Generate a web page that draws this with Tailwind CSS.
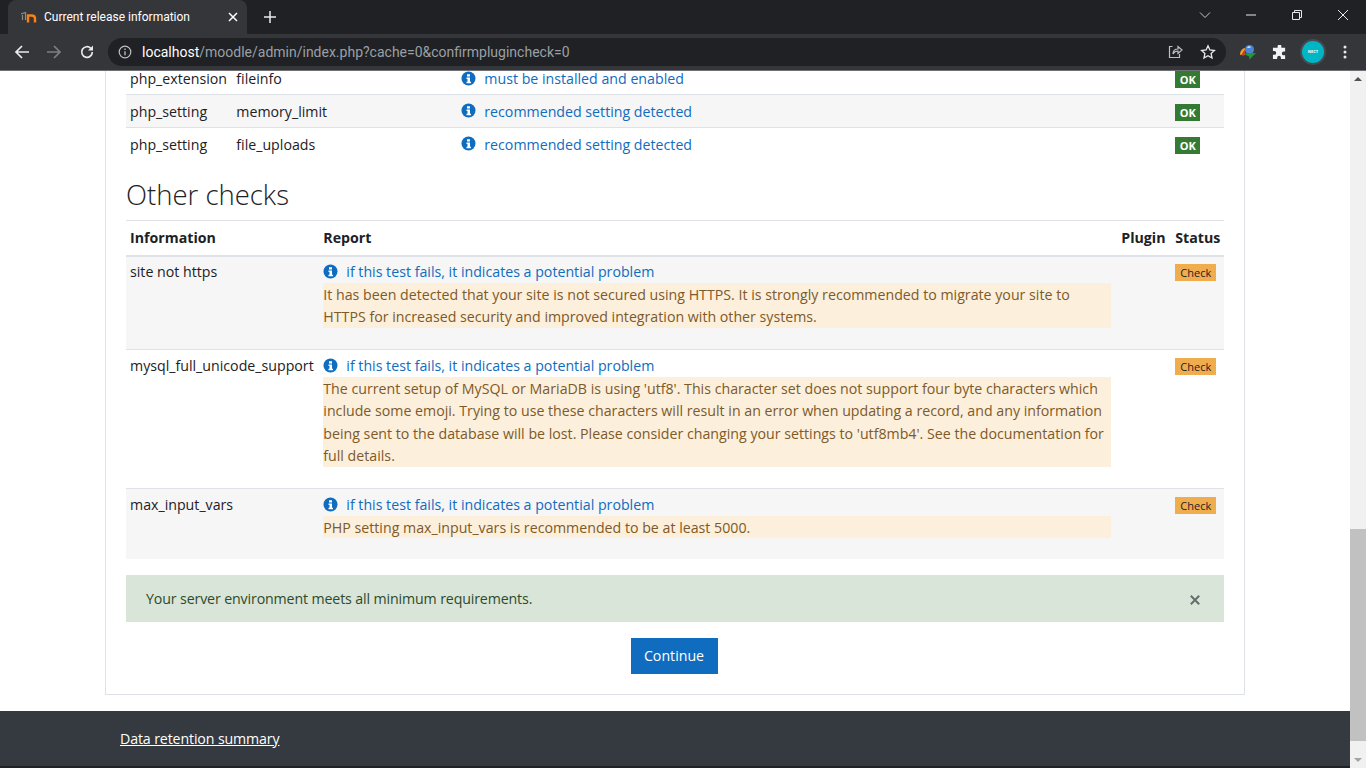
<!DOCTYPE html>
<html lang="en">
<head>
    <meta charset="UTF-8">
    <title>Current release information</title>
    <script src="https://cdn.jsdelivr.net/npm/@tailwindcss/browser@4"></script>
</head>
<body class="h-screen overflow-hidden flex flex-col bg-white font-['Open_Sans',sans-serif] text-[14.2px] leading-[22.5px] text-[#1d2125]">
    <!-- browser chrome -->
    <div class="h-[34px] bg-[#202124] flex items-end relative">
        <div class="ml-2 w-[239px] h-[34px] bg-[#35363a] rounded-t-lg flex items-center pl-[13px] pr-[7px] text-white text-[12px] font-['Roboto',sans-serif]">
            <svg class="w-[17px] h-[14px] mr-[6px]" viewBox="0 0 17 14"><path d="M0 4l4.500-1.500V5" fill="none" stroke="#8f8a85" stroke-width="1.200"/><path d="M1.500 5v5M4.500 5v5" stroke="#8f8a85" stroke-width="1.200"/><path d="M7 12.500V5.500h3.500c2 0 3.500 1 3.500 3v4" fill="none" stroke="#f98012" stroke-width="2.400"/></svg>
            <span class="flex-1">Current release information</span>
            <svg class="w-4 h-4 mr-[-1px]" viewBox="0 0 16 16"><path d="M4 4l8 8M12 4l-8 8" stroke="#fff" stroke-width="1.500"/></svg>
        </div>
        <svg class="w-4 h-4 ml-[15px] mb-[9px]" viewBox="0 0 16 16"><path d="M8 2v12M2 8h12" stroke="#e8eaed" stroke-width="1.500"/></svg>
        <div class="ml-auto flex items-center h-[34px] mb-[2px]">
            <svg class="w-3 h-3 mr-[34px]" viewBox="0 0 12 12"><path d="M1 3.500l5 5 5-5" fill="none" stroke="#c4c7c5" stroke-width="1"/></svg>
            <svg class="w-3 h-3 mr-[34px]" viewBox="0 0 12 12"><path d="M1 6h10" stroke="#e8eaed" stroke-width="1"/></svg>
            <svg class="w-3 h-3 mr-[34px]" viewBox="0 0 12 12"><path d="M1.500 3.500h7v7h-7zM3.500 3.500v-2h7v7h-2" fill="none" stroke="#e8eaed" stroke-width="1"/></svg>
            <svg class="w-3 h-3 mr-[17px]" viewBox="0 0 12 12"><path d="M1 1l10 10M11 1L1 11" stroke="#e8eaed" stroke-width="1"/></svg>
        </div>
    </div>
    <div class="h-[36px] bg-[#35363a] flex items-center relative">
        <svg class="w-4 h-4 ml-[14px]" viewBox="0 0 16 16"><path d="M15 8H2M8 2L2 8l6 6" fill="none" stroke="#e8eaed" stroke-width="1.700"/></svg>
        <svg class="w-4 h-4 ml-[16px]" viewBox="0 0 16 16"><path d="M1 8h13M8 2l6 6-6 6" fill="none" stroke="#7d7f82" stroke-width="1.700"/></svg>
        <svg class="w-4 h-4 ml-[17px]" viewBox="0 0 16 16"><path d="M13.300 8a5.300 5.300 0 1 1-1.500-3.700" fill="none" stroke="#e8eaed" stroke-width="1.700"/><path d="M14 1.500v5h-5z" fill="#e8eaed"/></svg>
        <div class="ml-[13px] w-[1118px] h-7 rounded-full bg-[#202124] flex items-center pl-[8px] font-['Roboto',sans-serif] text-[14px] text-[#9aa0a6]">
            <svg class="w-[14px] h-[14px] mr-[10px] ml-[2px]" viewBox="0 0 14 14"><circle cx="7" cy="7" r="5.800" fill="none" stroke="#bdc1c6" stroke-width="1.200"/><path d="M7 6.200v4M7 3.500v1.400" stroke="#bdc1c6" stroke-width="1.300"/></svg>
            <span><span class="text-white">localhost</span>/moodle/admin/index.php?cache=0&amp;confirmplugincheck=0</span>
            <svg class="w-4 h-4 ml-auto mr-[17px]" viewBox="0 0 16 16"><path d="M5.500 2.500H2.500v11h10V10" fill="none" stroke="#bdc1c6" stroke-width="1.200"/><path d="M6 10c0-3 2-5 5-5V2.500L15 6l-4 3.500V7c-2 0-4 1-5 3z" fill="none" stroke="#bdc1c6" stroke-width="1.200"/></svg>
            <svg class="w-4 h-4 mr-[10px]" viewBox="0 0 16 16"><path d="M8 1.800l1.900 4.200 4.500.5-3.300 3 .9 4.500L8 11.700 4 14l.9-4.500-3.300-3 4.500-.5z" fill="none" stroke="#e8eaed" stroke-width="1.300"/></svg>
        </div>
        <svg class="w-[18px] h-4 ml-[13px]" viewBox="0 0 18 16"><path d="M1 11c0-4 2-6.500 5-7L5 10z" fill="#e8a81f"/><path d="M3 12c0-3 1-5 3-6v5z" fill="#d8342c"/><circle cx="10.500" cy="5.500" r="4.500" fill="#4a86d8"/><path d="M8 3.500c1-1.500 3-1.500 4-.5-1 1-3 1.500-4 .5z" fill="#cfe3f7"/><path d="M4 9.500l13-.5-6.500 6.500-.5-3z" fill="#1f9a2f"/></svg>
        <svg class="w-[15px] h-[15px] ml-[15px]" viewBox="0 0 16 16"><path d="M6 1.500a2 2 0 0 1 4 0V3h4v4h-1.500a2 2 0 0 0 0 4H14v4H9.500v-1.500a2 2 0 0 0-4 0V15H1v-4.500h1.500a2 2 0 0 0 0-4H1V3h5z" fill="#f1f3f4"/></svg>
        <div class="ml-[13px] w-[26px] h-[26px] rounded-full bg-[#484a4f] flex items-center justify-center">
            <div class="w-[22px] h-[22px] rounded-full bg-[#00b5c4] flex items-center justify-center text-[4px] leading-none font-bold text-white">NECT</div>
        </div>
        <svg class="w-1 h-[14px] ml-[17px]" viewBox="0 0 4 14"><circle cx="2" cy="2" r="1.500" fill="#e8eaed"/><circle cx="2" cy="7" r="1.500" fill="#e8eaed"/><circle cx="2" cy="12" r="1.500" fill="#e8eaed"/></svg>
    </div>
    <div class="h-px bg-[#6e7074]"></div>

    <!-- page viewport -->
    <div class="flex-1 min-h-0 flex bg-[#202124]">
        <div class="flex-1 min-w-0 overflow-hidden bg-white">
            <div>
                <div class="mx-[105px] border border-[#dee2e6] border-t-0 px-5 pb-[20px]">
                    <table class="w-full table-fixed border-collapse">
                        <colgroup><col class="w-[105.500px]"><col class="w-[225px]"><col><col class="w-[53.500px]"></colgroup>
                        <tr class="h-[23px] border-b border-[#dee2e6] align-top leading-[16px]">
                            <td class="pl-[4px] pr-[4.800px]">php_extension</td><td class="px-[4.800px]">fileinfo</td>
                            <td class="px-[4.800px]"><span class="flex items-center gap-[8px] h-[16px] text-[#0f6cbf]"><svg class="w-[15px] h-[15px] mb-[2px]" viewBox="0 0 15 15"><circle cx="7.500" cy="7.500" r="7" fill="#0f6cbf"/><path d="M6 3.200h3v2.300H6zM5.500 6.500h3.500v4.200h1v1.500H5.500v-1.500h1V8h-1z" fill="#fff"/></svg>must be installed and enabled</span></td>
                            <td class="px-[4.800px]"><span class="block w-[25px] h-[17px] bg-[#357a32] text-white text-[11px] leading-[17px] font-bold text-center">OK</span></td>
                        </tr>
                        <tr class="h-[33px] border-b border-[#dee2e6] bg-[#f6f6f6] align-top leading-[22px]">
                            <td class="pl-[4px] pr-[4.800px] pt-[6px]">php_setting</td><td class="px-[4.800px] pt-[6px]">memory_limit</td>
                            <td class="px-[4.800px] pt-[6px]"><span class="flex items-center gap-[8px] text-[#0f6cbf]"><svg class="w-[15px] h-[15px] mb-[2px]" viewBox="0 0 15 15"><circle cx="7.500" cy="7.500" r="7" fill="#0f6cbf"/><path d="M6 3.200h3v2.300H6zM5.500 6.500h3.500v4.200h1v1.500H5.500v-1.500h1V8h-1z" fill="#fff"/></svg>recommended setting detected</span></td>
                            <td class="px-[4.800px] pt-[9px]"><span class="block w-[25px] h-[17px] bg-[#357a32] text-white text-[11px] leading-[17px] font-bold text-center">OK</span></td>
                        </tr>
                        <tr class="h-[33px] align-top leading-[22px]">
                            <td class="pl-[4px] pr-[4.800px] pt-[6px]">php_setting</td><td class="px-[4.800px] pt-[6px]">file_uploads</td>
                            <td class="px-[4.800px] pt-[6px]"><span class="flex items-center gap-[8px] text-[#0f6cbf]"><svg class="w-[15px] h-[15px] mb-[2px]" viewBox="0 0 15 15"><circle cx="7.500" cy="7.500" r="7" fill="#0f6cbf"/><path d="M6 3.200h3v2.300H6zM5.500 6.500h3.500v4.200h1v1.500H5.500v-1.500h1V8h-1z" fill="#fff"/></svg>recommended setting detected</span></td>
                            <td class="px-[4.800px] pt-[9px]"><span class="block w-[25px] h-[17px] bg-[#357a32] text-white text-[11px] leading-[17px] font-bold text-center">OK</span></td>
                        </tr>
                    </table>

                    <h2 class="mt-[17px] mb-[7px] text-[27.500px] leading-[36px] font-light">Other checks</h2>

                    <table class="w-full table-fixed border-collapse">
                        <colgroup><col class="w-[192.500px]"><col><col class="w-[54px]"><col class="w-[53.500px]"></colgroup>
                        <tr class="h-[35px] border-t border-b-2 border-[#dee2e6] font-bold text-left">
                            <th class="pl-[4px] pr-[4.800px]">Information</th><th class="px-[4.800px]">Report</th><th class="px-[4.800px]">Plugin</th><th class="px-[4.800px]">Status</th>
                        </tr>
                        <tr class="h-[94px] border-b border-[#dee2e6] bg-[#f6f6f6] align-top">
                            <td class="pl-[4px] pr-[4.800px] pt-[4px]">site not https</td>
                            <td class="pl-[4.800px] pr-[5.800px] pt-[4px]">
                                <span class="flex items-center gap-[8px] h-[23px] text-[#0f6cbf]"><svg class="w-[15px] h-[15px] mb-[2px]" viewBox="0 0 15 15"><circle cx="7.500" cy="7.500" r="7" fill="#0f6cbf"/><path d="M6 3.200h3v2.300H6zM5.500 6.500h3.500v4.200h1v1.500H5.500v-1.500h1V8h-1z" fill="#fff"/></svg>if this test fails, it indicates a potential problem</span>
                                <div class="-mt-[1px] pt-[1px] leading-[22px] bg-[#fcefdc] text-[#7d5a29]">It has been detected that your site is not secured using HTTPS. It is strongly recommended to migrate your site to HTTPS for increased security and improved integration with other systems.</div>
                            </td>
                            <td></td>
                            <td class="px-[4.800px] pt-[7px]"><span class="block w-[41px] h-[17px] bg-[#f0ad4e] text-[11px] leading-[17px] text-center">Check</span></td>
                        </tr>
                        <tr class="h-[139px] border-b border-[#dee2e6] align-top">
                            <td class="pl-[4px] pr-[4.800px] pt-[5px]">mysql_full_unicode_support</td>
                            <td class="pl-[4.800px] pr-[5.800px] pt-[5px]">
                                <span class="flex items-center gap-[8px] h-[22px] text-[#0f6cbf]"><svg class="w-[15px] h-[15px] mb-[2px]" viewBox="0 0 15 15"><circle cx="7.500" cy="7.500" r="7" fill="#0f6cbf"/><path d="M6 3.200h3v2.300H6zM5.500 6.500h3.500v4.200h1v1.500H5.500v-1.500h1V8h-1z" fill="#fff"/></svg>if this test fails, it indicates a potential problem</span>
                                <div class="h-[90px] pt-[0.5px] bg-[#fcefdc] text-[#7d5a29]">The current setup of MySQL or MariaDB is using 'utf8'. This character set does not support four byte characters which include some emoji. Trying to use these characters will result in an error when updating a record, and any information being sent to the database will be lost. Please consider changing your settings to 'utf8mb4'. See the documentation for full details.</div>
                            </td>
                            <td></td>
                            <td class="px-[4.800px] pt-[8px]"><span class="block w-[41px] h-[17px] bg-[#f0ad4e] text-[11px] leading-[17px] text-center">Check</span></td>
                        </tr>
                        <tr class="h-[70px] bg-[#f6f6f6] align-top">
                            <td class="pl-[4px] pr-[4.800px] pt-[5px]">max_input_vars</td>
                            <td class="pl-[4.800px] pr-[5.800px] pt-[5px]">
                                <span class="flex items-center gap-[8px] h-[22px] text-[#0f6cbf]"><svg class="w-[15px] h-[15px] mb-[2px]" viewBox="0 0 15 15"><circle cx="7.500" cy="7.500" r="7" fill="#0f6cbf"/><path d="M6 3.200h3v2.300H6zM5.500 6.500h3.500v4.200h1v1.500H5.500v-1.500h1V8h-1z" fill="#fff"/></svg>if this test fails, it indicates a potential problem</span>
                                <div class="h-[22px] pt-[1px] leading-[21px] bg-[#fcefdc] text-[#7d5a29]">PHP setting max_input_vars is recommended to be at least 5000.</div>
                            </td>
                            <td></td>
                            <td class="px-[4.800px] pt-[8px]"><span class="block w-[41px] h-[17px] bg-[#f0ad4e] text-[11px] leading-[17px] text-center">Check</span></td>
                        </tr>
                    </table>

                    <div class="mt-4 h-[47px] bg-[#d9e5d8] text-[#2d4a2b] flex items-center pl-5 pr-6 tracking-[-0.13px]">
                        <span class="flex-1 pt-[2px]">Your server environment meets all minimum requirements.</span>
                        <svg class="w-[10px] h-[10px] mt-[3px]" viewBox="0 0 10 10"><path d="M.800.800l8.400 8.400M9.200.800L.800 9.200" stroke="#666d6b" stroke-width="2"/></svg>
                    </div>
                    <div class="mt-4 flex justify-center pr-[2px]">
                        <button class="w-[87px] h-9 pt-[2px] bg-[#0f6cbf] text-white">Continue</button>
                    </div>
                </div>
                <div class="mt-4 h-[55px] bg-[#343a40] pl-[120px] pt-[17px] text-white tracking-[-0.13px]"><a class="underline" href="#">Data retention summary</a></div>
                <div class="h-[2px] bg-[#202124]"></div>
            </div>
        </div>
        <!-- scrollbar -->
        <div class="w-4 bg-[#f1f1f1] flex flex-col items-center relative">
            <svg class="w-2 h-2 mt-1" viewBox="0 0 8 8"><path d="M0 6l4-4 4 4z" fill="#505050"/></svg>
            <div class="absolute left-0 right-0 top-[458px] h-[212px] bg-[#c1c1c1]"></div>
            <svg class="w-2 h-2 absolute bottom-1" viewBox="0 0 8 8"><path d="M0 2l4 4 4-4z" fill="#a3a3a3"/></svg>
        </div>
    </div>
</body>
</html>
